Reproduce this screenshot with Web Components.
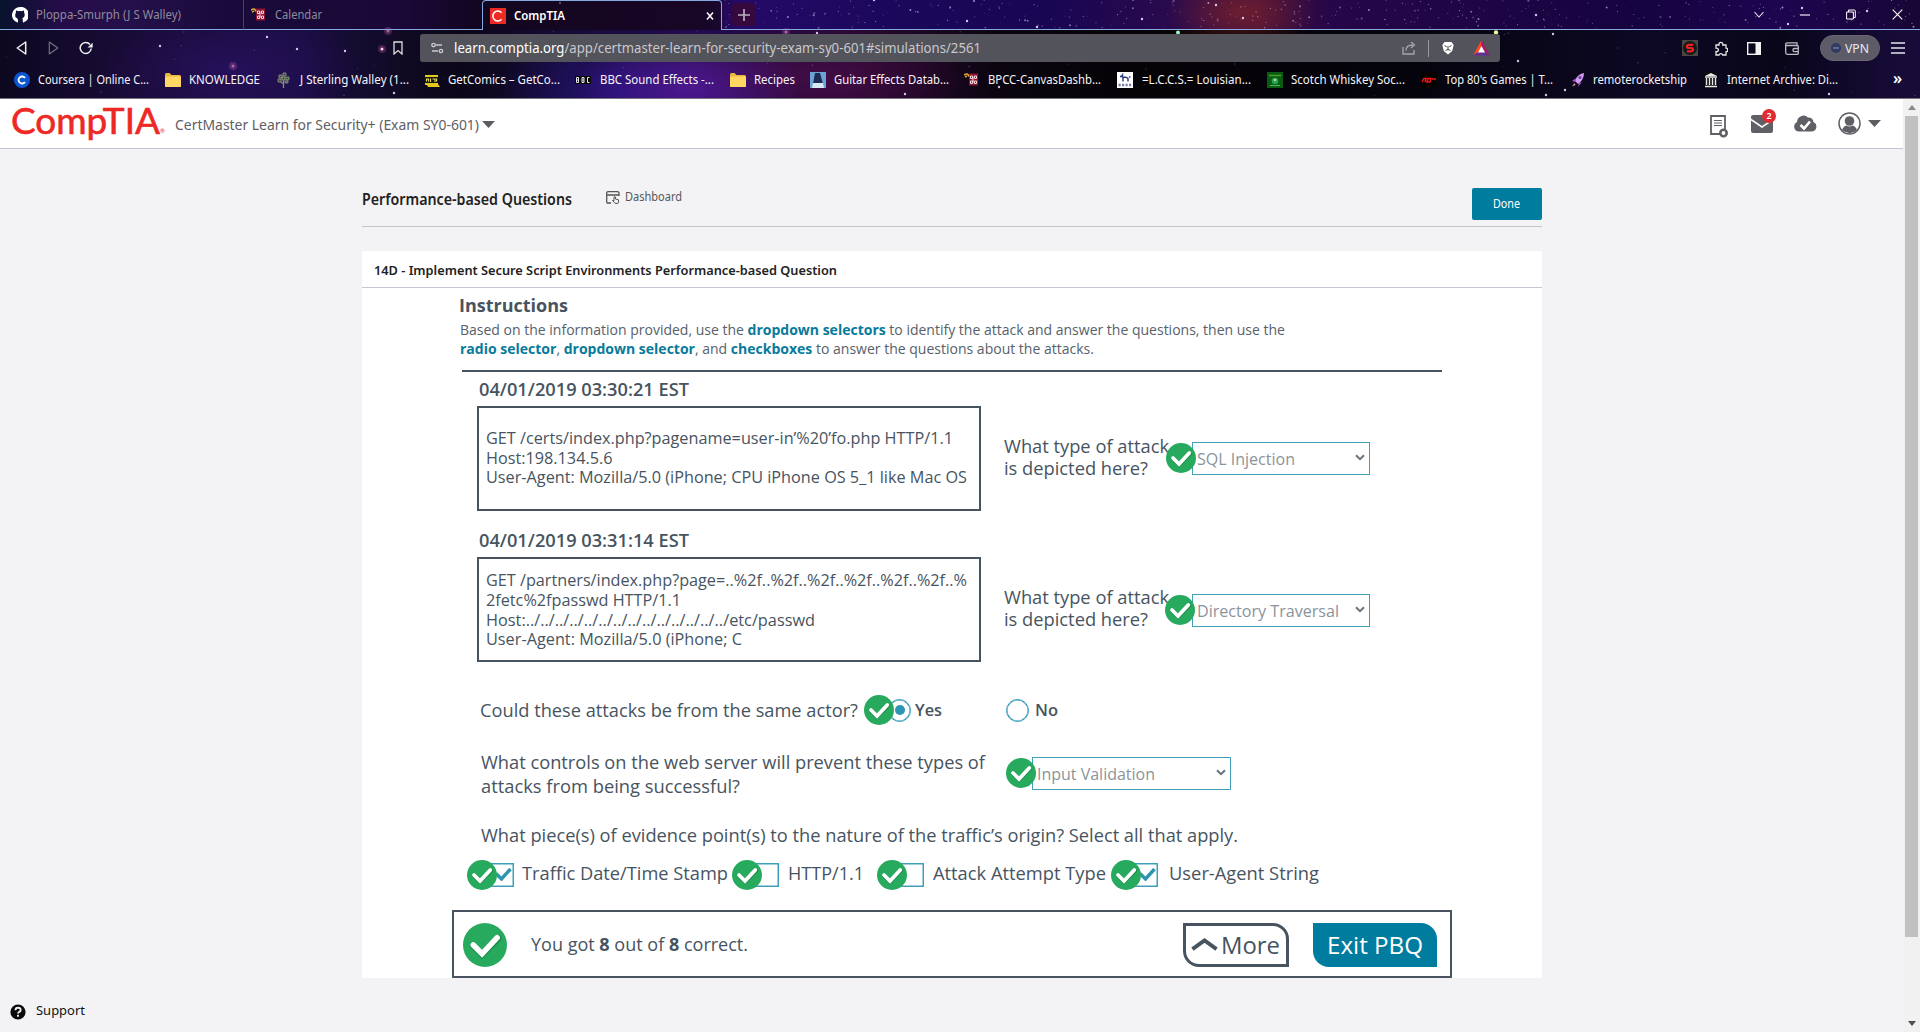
<!DOCTYPE html>
<html lang="en">
<head>
<meta charset="utf-8">
<title>CompTIA</title>
<style>
html,body{margin:0;height:100%;overflow:hidden}
body{background:#f3f3f5;font-family:"Open Sans","Noto Sans",sans-serif;font-size:14px;color:#47545f}
</style>
</head>
<body>
<pbq-window></pbq-window>
<script>
const define = (name, html, after) => customElements.define(name, class extends HTMLElement {
  connectedCallback() {
    if (this.shadowRoot) return;
    const root = this.attachShadow({mode: 'open'});
    const t = document.createElement('template');
    t.innerHTML = typeof html === 'function' ? html(this) : html;
    root.append(t.content.cloneNode(true));
    if (after) after(this, root);
  }
});
const at = (el, n, d = '') => el.getAttribute(n) ?? d;

/* ---------- icons ---------- */
const icons = {
  github: [16,16,'<path fill="#fff" d="M8 0a8 8 0 0 0-2.500 15.600c.4 0 .5-.2.5-.5v-2.500c-.6-.9-.9-1.300-1.500-1.800C3 10.300 3.300 9 3.300 7.500c0-.9.2-1.500.7-2.100-.2-.5-.1-1.300.1-2 .8 0 1.500.4 2.100.8 1.200-.3 2.400-.3 3.600 0 .6-.4 1.300-.8 2.100-.8.2.7.3 1.500.1 2 .5.600.7 1.200.7 2.100 0 2.200-.9 3.200-2.600 3.500.5.500.7 1 .7 1.800v2.300c0 .3.1.6.5.5A8 8 0 0 0 8 0z"/>'],
  canvas: [15,15,'<rect x="5" y="1.500" width="9" height="12" fill="#8d1230"/><path d="M0 3c3-2 4-1 5 1.500M1 5l2-1" stroke="#d9a531" stroke-width="1.600" fill="none"/><path d="M6.500 4h2v2.500h-2zM10.500 4h2v2.500h-2zM6.500 9h2v2.500h-2zM10.500 9h2v2.500h-2zM9 4.500v6.500" stroke="#f3d9df" stroke-width="1" fill="none"/>'],
  comptia: [16,16,'<rect width="16" height="16" fill="#ee2a24"/><path d="M11.600 4.700a5 5 0 1 0 0 6.600" stroke="#fff" stroke-width="1.500" fill="none"/>'],
  back: [11,14,'<path d="M9.700 1v12L1.200 7z" fill="none" stroke="#eee" stroke-width="1.500" stroke-linejoin="round"/>'],
  fwd: [11,14,'<path d="M1.300 1v12L9.800 7z" fill="none" stroke="#777080" stroke-width="1.200" stroke-linejoin="round"/>'],
  reload: [14,14,'<path d="M12.200 7.500A5.500 5.500 0 1 1 11 3.500" fill="none" stroke="#eee" stroke-width="1.500"/><path d="M8.500 6.500h5.200V1.800z" fill="#eee"/>'],
  bookmark: [10,14,'<path d="M1 1h8v12L5 9.500 1 13z" fill="none" stroke="#ddd" stroke-width="1.300"/>'],
  tune: [13,12,'<g fill="none" stroke="#c9c9cf" stroke-width="1.300"><circle cx="2.500" cy="3" r="1.700"/><path d="M5 3h6M1 9h6"/><circle cx="10" cy="9" r="1.700"/></g>'],
  share: [14,14,'<path d="M1 6v7h11V9M4 9.500C4 5.500 7 4 11 4M9 1l3.500 3L9 7" fill="none" stroke="#a6a6ab" stroke-width="1.300"/>'],
  lion: [12,14,'<path d="M2.500 1h7l2.200 3-1.500 6L6 13.500 1.800 10 .3 4z" fill="#fff"/><path d="M2.500 4.500l2.200 1.300M9.500 4.500L7.300 5.800M6 5v4M3.500 9.500L6 8.500l2.500 1" stroke="#44444d" stroke-width="1" fill="none"/>'],
  bat: [17,16,'<path d="M8.500 0L0 15.500 8.500 10z" fill="#ff4724"/><path d="M8.500 0L17 15.500 8.500 10z" fill="#9e1f63"/><path d="M0 15.500h17L8.500 10z" fill="#662d91"/><path d="M8.500 6L5 12.500h7z" fill="#fff"/>'],
  puzzle: [14,15,'<path d="M2 4h3a2 2 0 1 1 3.800 0H12v3.200a1.800 1.800 0 0 1 0 3.600V14H8.800a2 2 0 0 0-3.800 0H2v-3.400a1.800 1.800 0 1 0 0-3.400z" fill="none" stroke="#e8e8ea" stroke-width="1.300"/>'],
  side: [14,13,'<rect x=".7" y=".7" width="12.600" height="11.600" fill="none" stroke="#f2f2f2" stroke-width="1.400"/><rect x="8.500" y="1" width="4.500" height="11" fill="#f2f2f2"/>'],
  wallet: [14,13,'<path d="M.7 2v8.500q0 1.800 1.800 1.800h9.800q1 0 1-1V4.500q0-1-1-1H1.500q-.8 0-.8-1 0-1.700 1.800-1.700H12v2.500M13.300 6.500H9.500a1.500 1.500 0 0 0 0 3.200h3.800" fill="none" stroke="#bdbcc4" stroke-width="1.300"/>'],
  menu: [14,12,'<path d="M0 1h14M0 6h14M0 11h14" stroke="#e6e6ea" stroke-width="1.300"/>'],
  s: [16,16,'<rect width="16" height="16" fill="#4a4644"/><circle cx="8" cy="8" r="7" fill="#1b1717"/><path d="M11 4.800H7Q5 4.800 5 6.400T7 8h2q2 0 2 1.600T9 11.300H5" stroke="#ee2222" stroke-width="2.200" fill="none"/>'],
  chev: [10,7,'<path d="M.5 1L5 6l4.500-5" stroke="#e8e8f0" stroke-width="1.100" fill="none"/>'],
  min: [10,2,'<path d="M0 1h10" stroke="#fff" stroke-width="1.100"/>'],
  restore: [10,11,'<path d="M.6 3h6.800v7H.6zM2.500 3V1h5.800q1 0 1 1v6.500H7.500" fill="none" stroke="#fff" stroke-width="1"/>'],
  close: [11,11,'<path d="M.7.700l9.600 9.600M10.300.700L.7 10.300" stroke="#fff" stroke-width="1.100"/>'],
  tabx: [8,8,'<path d="M1 .5l6 7M7 .5l-6 7" stroke="#fff" stroke-width="1.500"/>'],
  plus: [12,12,'<path d="M6 0v12M0 6h12" stroke="#b5b0bc" stroke-width="1.700"/>'],
  coursera: [16,16,'<circle cx="8" cy="8" r="8" fill="#0a56d0"/><path d="M11 6.100a3.500 3.500 0 1 0 0 3.800" stroke="#fff" stroke-width="1.900" fill="none"/>'],
  folder: [16,14,'<path d="M0 1.500q0-1.500 1.500-1.500h3l2 2h8Q16 2 16 3.500V14H0z" fill="#e9b93c"/><path d="M0 5q0-1.500 1.500-1.500H16V12.500q0 1.500-1.500 1.500h-13Q0 14 0 12.500z" fill="#ffd762"/>'],
  tree: [13,16,'<path d="M2 3h3v3H2zM6 1h3v3H6zM9 5h3v3H9zM1 7h3v3H1zM5 5h3v3H5zM8 9h3v2H8z" fill="#3c4a35" stroke="#a3ad94" stroke-width=".7"/><path d="M6.500 8v8M4 10l2.500 2" stroke="#8e8b83" stroke-width="1.300"/>'],
  comics: [16,16,'<path d="M1 3h13v9l2 3H4l-1-2H1z" fill="#e3c81d"/><path d="M0 5h14v6H1z" fill="#161a12"/><path d="M2.500 9.500V7h2v2.500M6.500 6.500v3.500M8.500 7h2.500v3M12.500 6.500v3" stroke="#e8dc60" stroke-width="1.100" fill="none"/>'],
  bbc: [16,8,'<path d="M0 0h5v8H0zM5.500 0h5v8h-5zM11 0h5v8h-5z" fill="#060606"/><path d="M1.500 1.500v5H3.500v-5zM1.500 4h2M7 1.500v5H9v-5zM7 4h2M14.500 1.500h-2v5h2" stroke="#fff" stroke-width=".9" fill="none"/>'],
  pedal: [16,16,'<rect width="16" height="16" fill="#6ba3d6"/><path d="M5 1h5l3 11H3z" fill="#1d2b55"/><path d="M3 11h10l1 5H2z" fill="#d8e8f4"/>'],
  lccs: [16,16,'<rect width="16" height="16" fill="#fff"/><path d="M3 4.500h1.500l1-1.500v2l4 .5 1.500 1V9.500M6 5v4.500M12 5.500l1.500-1" stroke="#26357c" stroke-width="1.400" fill="none"/><path d="M1.500 13h13" stroke="#7780a5" stroke-width="2.500" stroke-dasharray="2.200 1.300"/>'],
  scotch: [16,16,'<rect width="16" height="16" fill="#095c12"/><path d="M2 3.500h12" stroke="#4d9b2b" stroke-width="1.500"/><circle cx="8" cy="9" r="3.300" fill="#1fa45c"/><circle cx="8" cy="8" r="1.300" fill="#d8c878"/><path d="M3 13.500h10" stroke="#50b060" stroke-width="1"/>'],
  eighty: [16,16,'<rect width="16" height="16" fill="#050202"/><path d="M1 10l2-3.500h2l-1 3.500M6 10l1-3.500h3L9 10zM11 7h4" stroke="#f31616" stroke-width="1.500" fill="none"/>'],
  rocket: [14,16,'<path d="M13 1C8 2 5 5 4 9l3 3c3-2 6-6 6-11z" fill="#d59bf0"/><path d="M5 6L1 9l3 1zM8 11l-1 4 4-5z" fill="#9355c4"/><path d="M3.500 11L1 14.500 4.500 13z" fill="#f08cae"/><circle cx="9" cy="5.500" r="1.500" fill="#5f3f9c"/>'],
  archive: [14,16,'<rect width="14" height="16" fill="#0b0b0f"/><path d="M7 1l6 3H1z" fill="#e8e8ea"/><path d="M1 5h12M2.500 6v7M5.500 6v7M8.500 6v7M11.500 6v7M1 14.500h12" stroke="#e8e8ea" stroke-width="1.400"/>'],
  caret: [13,7,'<path d="M0 0h13L6.500 7z" fill="#5c5d61"/>'],
  doc: [19,24,'<path d="M1 1h14v18H1z" fill="#fff" stroke="#5f6065" stroke-width="1.800"/><path d="M4 5.500h8M4 8h8M4 10.500h8" stroke="#5f6065" stroke-width="1.200"/><circle cx="13.500" cy="18" r="3.200" fill="#fff" stroke="#5f6065" stroke-width="2.600"/>'],
  mail: [22,18,'<path d="M2 0h18q2 0 2 2v1.500L11 11 0 3.500V2Q0 0 2 0z" fill="#5f6065"/><path d="M0 5.500l11 7.500 11-7.500V16q0 2-2 2H2q-2 0-2-2z" fill="#5f6065"/>'],
  cloud: [23,17,'<path d="M5 16.500A5 5 0 0 1 3 7a6.500 6.500 0 0 1 11-4.500A5 5 0 0 1 19.500 7a5 5 0 0 1-1.500 9.500z" fill="#5f6065"/><path d="M6.500 10l3.500 3.500 6-7" stroke="#fff" stroke-width="2.600" fill="none"/>'],
  user: [23,23,'<circle cx="11.500" cy="11.500" r="10.500" fill="#fff" stroke="#5f6065" stroke-width="1.500"/><circle cx="11.500" cy="9" r="4.800" fill="#5f6065"/><path d="M4 18q1.500-4 4.500-4.500 3 2 6 0Q17.500 14 19 18q-7 6.500-15 0z" fill="#5f6065"/>'],
  dash: [14,13,'<path d="M5 12H2q-1.300 0-1.300-1.300V2Q.7.700 2 .7h9.500Q13 .7 13 2v3M.7 4H13" fill="none" stroke="#555" stroke-width="1.300"/><path d="M9 12.300L6.500 9.500l1.500.3V6q1-.8 1.500 0v2l3 .8V11l-.8 1.500z" fill="#f3f3f5" stroke="#555" stroke-width="1"/>'],
  help: [16,16,'<circle cx="8" cy="8" r="7.600" fill="#0a0a0a"/><path d="M5.500 6.200q0-2.400 2.600-2.400t2.500 2.100q0 1.300-1.300 1.900-1.200.5-1.200 1.600M8 10.800v2" stroke="#f3f3f5" stroke-width="1.900" fill="none"/>'],
  sel: [10,7,'<path d="M1 1.200l4 4 4-4" stroke="#66727c" stroke-width="2" fill="none"/>'],
  up: [28,13,'<path d="M1.500 11.500L14 2.500l12.500 9" stroke="#47545f" stroke-width="4" fill="none"/>'],
  result: [30,30,'<circle cx="15" cy="15" r="15" fill="#27aa5e"/><path d="M7 15.500l6 6L24 10.500" fill="none" stroke="#168a45" stroke-width="4.400" stroke-linecap="round"/><path d="M7 15l6 6L23.300 10" fill="none" stroke="#fff" stroke-width="3.800" stroke-linecap="round"/>'],
  tick: [17,13,'<path d="M1 5.500l5.500 5.500L15.500 1" stroke="#2d94b4" stroke-width="3.400" fill="none"/>']
};
define('ui-icon', el => {
  const [w, h, body] = icons[at(el, 'name')], W = at(el, 'w', w), H = W * h / w;
  return `<style>:host{display:block;flex:none;width:${W}px;height:${H}px}svg{display:block}</style><svg width="${W}" height="${H}" viewBox="0 0 ${w} ${h}">${body}</svg>`;
});

/* ---------- night-sky backdrop of the browser theme ---------- */
define('star-field', () => {
  let seed = 91, r = () => (seed = (seed * 16807) % 2147483647) / 2147483647, s = '';
  const dot = (x, y, q, c, o) => s += `<circle cx="${x.toFixed(1)}" cy="${y.toFixed(1)}" r="${q}" fill="${c}" opacity="${o}"/>`;
  for (let i = 0; i < 330; i++) dot(725 + r() * 1195, r() * 28, r() < .15 ? 1 : .6, '#cdb8ee', (.15 + r() * .6).toFixed(2));
  for (let i = 0; i < 80; i++) dot(r() * 1920, 31 + r() * 66, .7, '#a99add', (.1 + r() * .35).toFixed(2));
  [[160,46],[267,37],[297,49],[345,51],[394,93],[817,33],[905,94],[874,0],[999,87],[1518,61],[1553,34],[1565,90],[1546,95],[1829,94],[560,3],[1216,5],[1142,19],[1243,18],[967,21],[1037,27],[1536,15],[1802,8],[1788,24],[1867,11]].forEach(p => dot(p[0], p[1], 1.2, '#e6dcff', .9));
  [[382,49],[233,66],[388,31],[786,32]].forEach(p => { dot(p[0], p[1], 4, '#b04a9c', .35); dot(p[0], p[1], 1.5, '#ffd0e8', p[0] === 382 ? 1 : .45); });
  dot(1178, 32.500, 2, '#9df5c8', 1); dot(1496, 32.500, 2.200, '#eef5a0', 1);
  return `<style>:host{display:block;width:1920px;height:98px;background:
   radial-gradient(75px 40px at 1240px 12px,#8a2626a0,transparent),
   linear-gradient(90deg,#07122c 0,#250c49 60px,#25104b 130px,#180a3a 230px,#1b0838 400px,#120620 480px,#220833 700px,#240a68 740px,#1a085a 900px,#190653 1050px,#2a0a4c 1180px,#42103c 1260px,#260748 1330px,#15033f 1640px,#1e0550 1780px,#180636 1920px) 0 0/100% 29px no-repeat,
   radial-gradient(110px 60px at 690px 88px,#56199ad0,transparent),
   radial-gradient(150px 44px at 820px 78px,#4a0d48c0,transparent),
   radial-gradient(130px 60px at 230px 70px,#2b1268b0,transparent),
   radial-gradient(120px 60px at 620px 90px,#2a1488c0,transparent),
   linear-gradient(90deg,#0d0820,#180b35 120px,#1a0d42 300px,#100a24 400px,#0b0718 460px,#150b35 560px,#210a4c 700px,#2c0835 850px,#0a050f 1000px,#050306 1150px,#05040c 1400px,#0d0824 1650px,#090619 1780px,#170b38 1900px)}svg{display:block}</style><svg width="1920" height="98">${s}</svg>`;
});

/* ---------- browser chrome ---------- */
define('browser-tab', el => `<style>
:host{display:flex;align-items:center;box-sizing:border-box;height:30px;border-bottom:1px solid #86a9e4;color:#8f8a9c;font-size:12px;padding-left:${at(el,'pad','12')}px;gap:9px}
:host([active]){border:1px solid #86a9e4;border-bottom:0;border-radius:4px 4px 0 0;background:#13061fa8;color:#fff;font-weight:600;padding-right:7px}
ui-icon[name=tabx]{margin-left:auto}
:host([divided]){border-right:1px solid #4a4458}</style>
<ui-icon name="${at(el,'icon')}"></ui-icon><slot></slot>${el.hasAttribute('active') ? '<ui-icon name="tabx"></ui-icon>' : ''}`);

define('book-mark', el => `<style>
:host{display:flex;align-items:center;flex:none;color:#f4f4f8;font-size:12px;width:${at(el,'span')}px;height:20px}
.i{width:${at(el,'gap')}px;display:flex}</style><span class="i"><ui-icon name="${at(el,'icon')}"></ui-icon></span><fit-text w="${at(el,'w')}"><slot></slot></fit-text>`);

const marks = [
 [14,'coursera',38,149,'Coursera | Online C...'],[165,'folder',189,260,'KNOWLEDGE'],[277,'tree',300,409,'J Sterling Walley (1...'],
 [424,'comics',448,560,'GetComics – GetCo...'],[575,'bbc',600,714,'BBC Sound Effects -...'],[730,'folder',754,795,'Recipes'],
 [810,'pedal',834,949,'Guitar Effects Datab...'],[964,'canvas',988,1101,'BPCC-CanvasDashb...'],[1117,'lccs',1142,1251,'=L.C.C.S.= Louisian...'],
 [1267,'scotch',1291,1405,'Scotch Whiskey Soc...'],[1421,'eighty',1445,1553,"Top 80's Games | T..."],[1571,'rocket',1593,1687,'remoterocketship'],
 [1704,'archive',1727,1838,'Internet Archive: Di...']];

define('browser-chrome', `<style>
:host{display:grid;height:99px;overflow:hidden;font-family:"Noto Sans","Open Sans",sans-serif}
star-field,.ui{grid-area:1/1}
.ui{display:flex;flex-direction:column;width:1920px;height:99px;box-sizing:border-box;border-bottom:1px solid #77747e;z-index:1}
.tabs,.bar,.marks{display:flex;align-items:center}
.tabs{height:30px}.bar{height:36px}.marks{height:28px;padding-left:14px}
.marks fit-text,.marks book-mark{margin-top:-1px}
.rest{display:flex;align-items:center;flex:1;height:29px;border-bottom:1px solid #86a9e4;padding-left:10px}
.new{width:24px;height:23px;border-radius:4px;background:#36093e;display:flex;align-items:center;justify-content:center}
.url{display:flex;align-items:center;width:1080px;height:28px;border-radius:3px;background:#53535b;margin-left:17px;font-size:14px;color:#c8c8cd}
.url b{font-weight:400;color:#fff}
.vpn{display:flex;align-items:center;box-sizing:border-box;width:60px;height:26px;border-radius:13px;background:#5d5b68;border:1px solid #696774;color:#e8e8ee;font-size:12px;margin-left:21px;padding-left:10px;gap:4px}
.vpn i{width:10px;height:10px;border-radius:5px;background:linear-gradient(90deg,#2f3b63 2px,transparent 2px 8px,#2f3b63 8px),linear-gradient(#2f3b63 4px,#606a88 4px 6px,#2f3b63 6px)}
.sep{width:1px;height:17px;background:#9a9aa0}
</style>
<star-field></star-field>
<div class="ui">
 <div class="tabs">
  <browser-tab icon="github" divided style="width:244px"><fit-text w="145" style="margin-left:-1px">Ploppa-Smurph (J S Walley)</fit-text></browser-tab>
  <browser-tab icon="canvas" pad="7" style="width:238px"><fit-text w="47">Calendar</fit-text></browser-tab>
  <browser-tab icon="comptia" active pad="7" style="width:240px"><fit-text w="51" style="margin:-1px 0 0 -1px">CompTIA</fit-text></browser-tab>
  <div class="rest"><span class="new"><ui-icon name="plus"></ui-icon></span>
   <ui-icon name="chev" style="margin-left:998px"></ui-icon><ui-icon name="min" style="margin-left:36px"></ui-icon><ui-icon name="restore" style="margin-left:36px"></ui-icon><ui-icon name="close" style="margin-left:36px"></ui-icon></div>
 </div>
 <div class="bar">
  <ui-icon name="back" style="margin-left:16px"></ui-icon><ui-icon name="fwd" style="margin-left:21px"></ui-icon><ui-icon name="reload" style="margin-left:20px"></ui-icon><ui-icon name="bookmark" style="margin-left:300px"></ui-icon>
  <div class="url"><ui-icon name="tune" style="margin-left:11px"></ui-icon><fit-text w="527" style="margin:-1px 0 0 10px"><b>learn.comptia.org</b>/app/certmaster-learn-for-security-exam-sy0-601#simulations/2561</fit-text>
   <ui-icon name="share" style="margin-left:421px"></ui-icon><span class="sep" style="margin-left:12px"></span><ui-icon name="lion" style="margin-left:13px"></ui-icon><ui-icon name="bat" style="margin-left:19px"></ui-icon></div>
  <ui-icon name="s" style="margin-left:182px"></ui-icon><ui-icon name="puzzle" style="margin-left:16px"></ui-icon><ui-icon name="side" style="margin-left:19px"></ui-icon><ui-icon name="wallet" style="margin-left:24px"></ui-icon>
  <div class="vpn"><i></i><fit-text w="24">VPN</fit-text></div><ui-icon name="menu" style="margin-left:11px"></ui-icon>
 </div>
 <div class="marks">${marks.map((m, i) => `<book-mark icon="${m[1]}" gap="${m[2] - m[0]}" w="${m[3] - m[2]}" span="${(marks[i + 1] ? marks[i + 1][0] : 1893) - m[0]}">${m[4]}</book-mark>`).join('')}<span style="color:#fff;font-size:16px;line-height:18px;margin-top:-4px;font-weight:600">»</span></div>
</div>`);

/* ---------- application header ---------- */
define('comptia-logo', `<style>:host{display:flex;width:152px;height:49px;color:#ee2824;font-family:Lato,sans-serif;align-items:flex-start}
.w{font-size:36px;line-height:43px;-webkit-text-stroke:.6px #ee2824}.r{font-size:6px;line-height:8px;margin-top:28px}</style>
<fit-text class="w" w="149">CompTIA</fit-text><span class="r">®</span>`);

define('app-header', `<style>:host{display:flex;align-items:center;box-sizing:border-box;width:1903px;height:50px;background:#fff;border-bottom:1px solid #c6c4d2;padding-left:11px;color:#5f6063;font-size:14.500px;font-family:"Noto Sans","Open Sans",sans-serif}
.mail{display:flex;margin-left:22px;position:relative}
.n{position:absolute;left:11px;top:-6px;width:14px;height:14px;border-radius:7px;background:#e02b33;color:#fff;font-size:9px;line-height:14px;text-align:center;font-weight:600}</style>
<comptia-logo></comptia-logo><fit-text w="304" style="margin:0 0 0 12px">CertMaster Learn for Security+ (Exam SY0-601)</fit-text><ui-icon name="caret" style="margin:1px 0 0 3px"></ui-icon>
<ui-icon name="doc" style="margin:6px 0 0 1215px"></ui-icon>
<span class="mail"><ui-icon name="mail"></ui-icon><span class="n">2</span></span>
<ui-icon name="cloud" style="margin-left:21px"></ui-icon><ui-icon name="user" style="margin:-1px 0 0 21px"></ui-icon><ui-icon name="caret" style="margin-left:7px"></ui-icon>`);

define('page-heading', `<style>:host{display:flex;align-items:flex-start;box-sizing:border-box;width:1180px;height:78px;border-bottom:1px solid #c6c4d2;font-family:"Noto Sans","Open Sans",sans-serif}
h1{font-size:15.500px;line-height:20px;font-weight:600;color:#222;margin:40px 0 0}
.d{display:flex;align-items:center;gap:5px;margin:38px 0 0 34px;font-size:12px;line-height:20px;color:#55565a}
button{all:unset;display:flex;align-items:center;justify-content:center;width:70px;height:32px;border-radius:2px;background:#007c9f;color:#fff;font-size:12px;margin:39px 0 0 auto}</style>
<h1><fit-text w="210">Performance-based Questions</fit-text></h1><div class="d"><ui-icon name="dash"></ui-icon><fit-text w="57">Dashboard</fit-text></div><button><fit-text w="27" style="margin:-1px 1px 0 0">Done</fit-text></button>`);

/* ---------- question parts ---------- */
define('result-badge', el => `<style>:host{display:block;flex:none;position:relative;z-index:1}</style><ui-icon name="result" w="${at(el,'size','30')}"></ui-icon>`);

define('answer-select', el => `<style>:host{display:flex;flex:none;align-items:center;justify-content:space-between;box-sizing:border-box;width:${at(el,'box')}px;height:33px;border:1px solid #41a0b9;background:#fff;padding:0 4px 0 4px;margin-left:${at(el,'pull','-4')}px;font-size:16px;color:#8b949b}fit-text{padding-top:1px}ui-icon{margin-top:-1px}</style><fit-text w="${at(el,'w')}"><slot></slot></fit-text><ui-icon name="sel"></ui-icon>`);

define('log-entry', el => `<style>:host{display:block}
.date{margin-left:117px;font-size:18px;line-height:34px;height:34px;font-weight:600}
.row{display:flex;align-items:center;height:105px;margin-left:115px}
.log{display:flex;flex-direction:column;justify-content:center;align-items:flex-start;box-sizing:border-box;width:504px;height:105px;border:2px solid #47545f;padding:${at(el,'nudge','0')}px 0 0 7px;font-size:16px;line-height:19.600px}
.q{display:flex;flex-direction:column;margin:-3px 0 0 22.500px;font-size:18px;line-height:22.300px;width:162.500px}</style>
<div class="date"><fit-text w="210">${at(el,'date')}</fit-text></div>
<div class="row"><div class="log"><slot name="log"></slot></div>
<div class="q"><fit-text w="165">What type of attack</fit-text><fit-text w="144">is depicted here?</fit-text></div>
<result-badge style="margin-top:${at(el,'drop','0')}px;margin-left:${at(el,'shift','0')}px"></result-badge>
<answer-select box="178" w="${at(el,'w')}" pull="${at(el,'pull')}" style="margin-top:${at(el,'drop','0')}px">${at(el,'answer')}</answer-select></div>`);

define('radio-mark', `<style>:host{display:block;flex:none;box-sizing:border-box;width:23px;height:23px;border:1.500px solid #3298b7;box-shadow:inset 0 0 0 .5px #3298b7;border-radius:50%;background:#fff;padding:5.500px}i{display:block;width:10px;height:10px;border-radius:5px}:host([on]) i{background:#2d94b4}</style><i></i>`);

define('evidence-option', el => `<style>:host{display:flex;align-items:center;flex:none;width:${at(el,'span')}px;height:40px;font-size:18px}
.b{display:flex;align-items:center;justify-content:flex-end;flex:none;box-sizing:border-box;width:25px;height:24px;border:1px solid #3f9fbb;box-shadow:inset 0 0 0 .5px #3f9fbb;background:#fff;margin:-1px ${at(el,'gap','8')}px 0 -8px;padding-right:1px}</style><result-badge></result-badge><span class="b">${el.hasAttribute('on') ? '<ui-icon name="tick"></ui-icon>' : ''}</span><fit-text style="margin-top:-4px" w="${at(el,'w')}"><slot></slot></fit-text>`);

define('score-footer', `<style>:host{display:flex;align-items:center;box-sizing:border-box;width:1000px;height:68px;border:2px solid #47545f;margin:15px 0 0 90px;padding-left:9px;font-size:17.500px}
b{font-weight:700}
.btn{display:flex;align-items:center;box-sizing:border-box;height:44px;border-radius:0 16px 0 16px;font-size:23px;font-weight:500;margin-top:1px}
.btn fit-text{margin-top:1px}
.more{width:106px;border:3px solid #47545f;padding-left:5px;gap:3px;margin-left:435px}
.exit{width:124px;background:#007c9f;color:#fff;padding-left:14px;margin-left:24px}</style>
<result-badge size="44" style="margin-top:1px"></result-badge><fit-text w="217" style="margin-left:24px">You got <b>8</b> out of <b>8</b> correct.</fit-text>
<div class="btn more"><ui-icon name="up" w="27"></ui-icon><fit-text w="59">More</fit-text></div><div class="btn exit"><fit-text w="96">Exit PBQ</fit-text></div>`);

define('question-card', `<style>:host{display:block;width:1180px;height:727px;margin-top:24px;background:#fff;overflow:hidden}
.t{box-sizing:border-box;height:37px;border-bottom:1px solid #c6c4d2;padding:1px 0 0 12px;font:600 13px/36px "Noto Sans","Open Sans",sans-serif;color:#222}
h2{margin:2px 0 0 97px;font-size:18px;line-height:30px;height:30px;font-weight:700}
.p{display:flex;flex-direction:column;height:50px;margin-left:98px;font-size:14px;line-height:19.400px;color:#56616b}
.p b{color:#087a9b;font-weight:700}
.hr{width:980px;height:2px;margin-left:100px;background:#47545f}
.r{display:flex;align-items:center;margin-left:118px;font-size:18px}
.l{font-size:16px;font-weight:600}
.s{display:flex;flex-direction:column;line-height:24px}</style>
<div class="t"><fit-text w="463">14D - Implement Secure Script Environments Performance-based Question</fit-text></div>
<h2><fit-text w="109">Instructions</fit-text></h2>
<div class="p"><fit-text w="825">Based on the information provided, use the <b>dropdown selectors</b> to identify the attack and answer the questions, then use the</fit-text>
<fit-text w="634"><b>radio selector</b>, <b>dropdown selector</b>, and <b>checkboxes</b> to answer the questions about the attacks.</fit-text></div>
<div class="hr"></div>
<log-entry date="04/01/2019 03:30:21 EST" answer="SQL Injection" w="98" pull="-4" drop="-1"><fit-text slot="log" w="467">GET /certs/index.php?pagename=user-in’%20’fo.php HTTP/1.1</fit-text><fit-text slot="log" w="126.500">Host:198.134.5.6</fit-text><fit-text slot="log" w="481">User-Agent: Mozilla/5.0 (iPhone; CPU iPhone OS 5_1 like Mac OS</fit-text></log-entry>
<log-entry style="margin-top:12px" date="04/01/2019 03:31:14 EST" answer="Directory Traversal" w="142" shift="-1" pull="-3" drop="1" nudge="2"><fit-text slot="log" w="481">GET /partners/index.php?page=..%2f..%2f..%2f..%2f..%2f..%2f..%</fit-text><fit-text slot="log" w="195">2fetc%2fpasswd HTTP/1.1</fit-text><fit-text slot="log" w="329">Host:../../../../../../../../../../../../../../etc/passwd</fit-text><fit-text slot="log" w="256">User-Agent: Mozilla/5.0 (iPhone; C</fit-text></log-entry>
<div class="r" style="height:40px;margin-top:28px"><fit-text w="378">Could these attacks be from the same actor?</fit-text><result-badge style="margin-left:6px"></result-badge><radio-mark on style="margin-left:-6px"></radio-mark><fit-text class="l" w="27" style="margin-left:4px">Yes</fit-text><radio-mark style="margin-left:64px"></radio-mark><fit-text class="l" w="23" style="margin-left:6px">No</fit-text></div>
<div class="r" style="height:48px;margin-top:20px;"><div class="s"><fit-text w="504" style="margin-left:.5px">What controls on the web server will prevent these types of</fit-text><fit-text w="259" style="margin-left:.5px">attacks from being successful?</fit-text></div><result-badge style="margin-left:21.500px;margin-top:-2px"></result-badge><answer-select box="199" w="118" pull="-4" style="margin-top:-2px">Input Validation</answer-select></div>
<div class="r" style="height:24px;margin-top:25px"><fit-text w="757" style="margin-left:.5px">What piece(s) of evidence point(s) to the nature of the traffic’s origin? Select all that apply.</fit-text></div>
<div class="r" style="height:40px;margin:8px 0 0 105px"><evidence-option on span="265" w="206">Traffic Date/Time Stamp</evidence-option><evidence-option span="145" gap="9" w="76">HTTP/1.1</evidence-option><evidence-option span="234" gap="9" w="173">Attack Attempt Type</evidence-option><evidence-option on span="220" gap="11" w="150">User-Agent String</evidence-option></div>
<score-footer></score-footer>`);

define('scroll-track', `<style>:host{display:flex;flex-direction:column;align-items:center;width:17px;height:933px;background:#f1f1f1}
.a{height:17px;display:flex;align-items:center}.thumb{width:13px;height:821px;background:#c1c1c1}.d{margin-top:auto}svg{display:block}</style>
<span class="a"><svg width="8" height="5"><path d="M0 5h8L4 0z" fill="#8a8a8a"/></svg></span><div class="thumb"></div><span class="a d"><svg width="8" height="5"><path d="M0 0h8L4 5z" fill="#505050"/></svg></span>`);

define('support-link', `<style>:host{display:flex;align-items:center;gap:10px;margin:auto 0 0 10px;height:41px;font:13px/20px "Noto Sans","Open Sans",sans-serif;color:#111}</style><ui-icon name="help"></ui-icon><fit-text w="49" style="margin-top:-4px">Support</fit-text>`);

define('pbq-window', `<style>:host{display:flex;flex-direction:column;width:1920px;height:1032px}
.body{display:flex;height:933px}.main{display:flex;flex-direction:column;width:1903px}.col{margin-left:362px}</style>
<browser-chrome></browser-chrome><div class="body"><div class="main"><app-header></app-header><div class="col"><page-heading></page-heading><question-card></question-card></div><support-link></support-link></div><scroll-track></scroll-track></div>`);

/* Single line of text squeezed or stretched to an exact width. */
define('fit-text', el => `<style>:host{display:block;flex:none;width:${at(el,'w')}px;white-space:nowrap}span{display:inline-block;transform-origin:0 50%}</style><span><slot></slot></span>`, (el, root) => {
  const s = root.querySelector('span'), n = s.offsetWidth ? s.getBoundingClientRect().width : 0;
  if (n) s.style.transform = `scaleX(${(at(el, 'w') / n).toFixed(4)})`;
});
</script>
</body>
</html>
